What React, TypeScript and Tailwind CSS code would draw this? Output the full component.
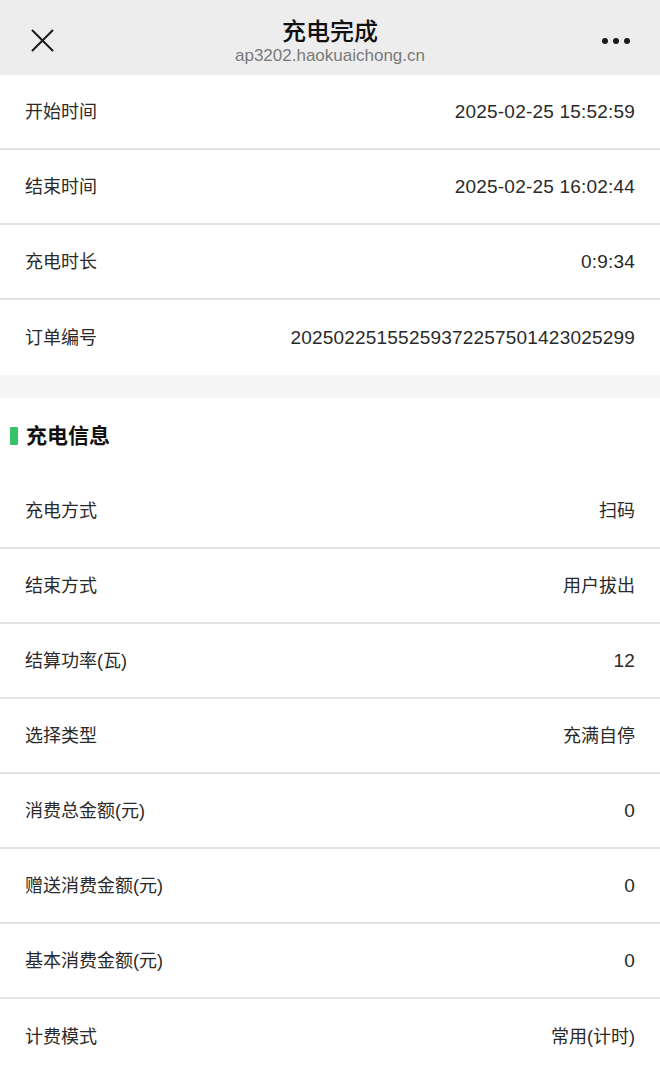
import React from "react";

const font = { fontFamily: '"Liberation Sans", "Noto Sans CJK SC", sans-serif' };

function Row({ label, value, last }: { label: string; value: string; last?: boolean }) {
  const numeric = /^[0-9:\- ]+$/.test(value);
  return (
    <div className={`flex h-[75px] items-center justify-between pl-[25px] pr-[25px] ${last ? "" : "border-b-2 border-[#e3e3e3]"}`}>
      <span className="text-[18px] text-[#2a2a2a] pt-[2px]">{label}</span>
      <span className={`${numeric ? "text-[19px] tracking-[0.2px]" : "text-[18px]"} text-[#2a2a2a] pt-[2px]`}>{value}</span>
    </div>
  );
}

export default function App() {
  const top = [
    ["开始时间", "2025-02-25 15:52:59"],
    ["结束时间", "2025-02-25 16:02:44"],
    ["充电时长", "0:9:34"],
    ["订单编号", "20250225155259372257501423025299"],
  ];
  const info = [
    ["充电方式", "扫码"],
    ["结束方式", "用户拔出"],
    ["结算功率(瓦)", "12"],
    ["选择类型", "充满自停"],
    ["消费总金额(元)", "0"],
    ["赠送消费金额(元)", "0"],
    ["基本消费金额(元)", "0"],
    ["计费模式", "常用(计时)"],
  ];
  return (
    <div className="min-h-[1071px] w-[660px] bg-white" style={font}>
      <div className="relative flex h-[75px] flex-col items-center bg-[#ededed] pt-[18px]">
        <svg className="absolute left-[31px] top-[29px]" width="23" height="23" viewBox="0 0 23 23">
          <path d="M1.5 1.5 L21.5 21.5 M21.5 1.5 L1.5 21.5" stroke="#1a1a1a" strokeWidth="2" strokeLinecap="round" />
        </svg>
        <div className="text-[24px] font-medium leading-[28px] text-[#111]">充电完成</div>
        <div className="text-[17px] leading-[20px] text-[#7a7a7a]">ap3202.haokuaichong.cn</div>
        <div className="absolute right-[30px] top-[38px] flex gap-[5px]">
          <span className="block h-[6px] w-[6px] rounded-full bg-[#1a1a1a]" />
          <span className="block h-[6px] w-[6px] rounded-full bg-[#1a1a1a]" />
          <span className="block h-[6px] w-[6px] rounded-full bg-[#1a1a1a]" />
        </div>
      </div>
      <div>
        {top.map(([l, v], i) => (
          <Row key={l} label={l} value={v} last={i === top.length - 1} />
        ))}
      </div>
      <div className="h-[23px] bg-[#f5f5f5]" />
      <div className="flex h-[76px] items-center pl-[10px]">
        <span className="mr-[8px] block h-[18px] w-[8px] rounded-[1px] bg-[#36c46b]" />
        <span className="text-[21px] font-bold text-[#111]">充电信息</span>
      </div>
      <div>
        {info.map(([l, v], i) => (
          <Row key={l} label={l} value={v} last={i === info.length - 1} />
        ))}
      </div>
    </div>
  );
}
